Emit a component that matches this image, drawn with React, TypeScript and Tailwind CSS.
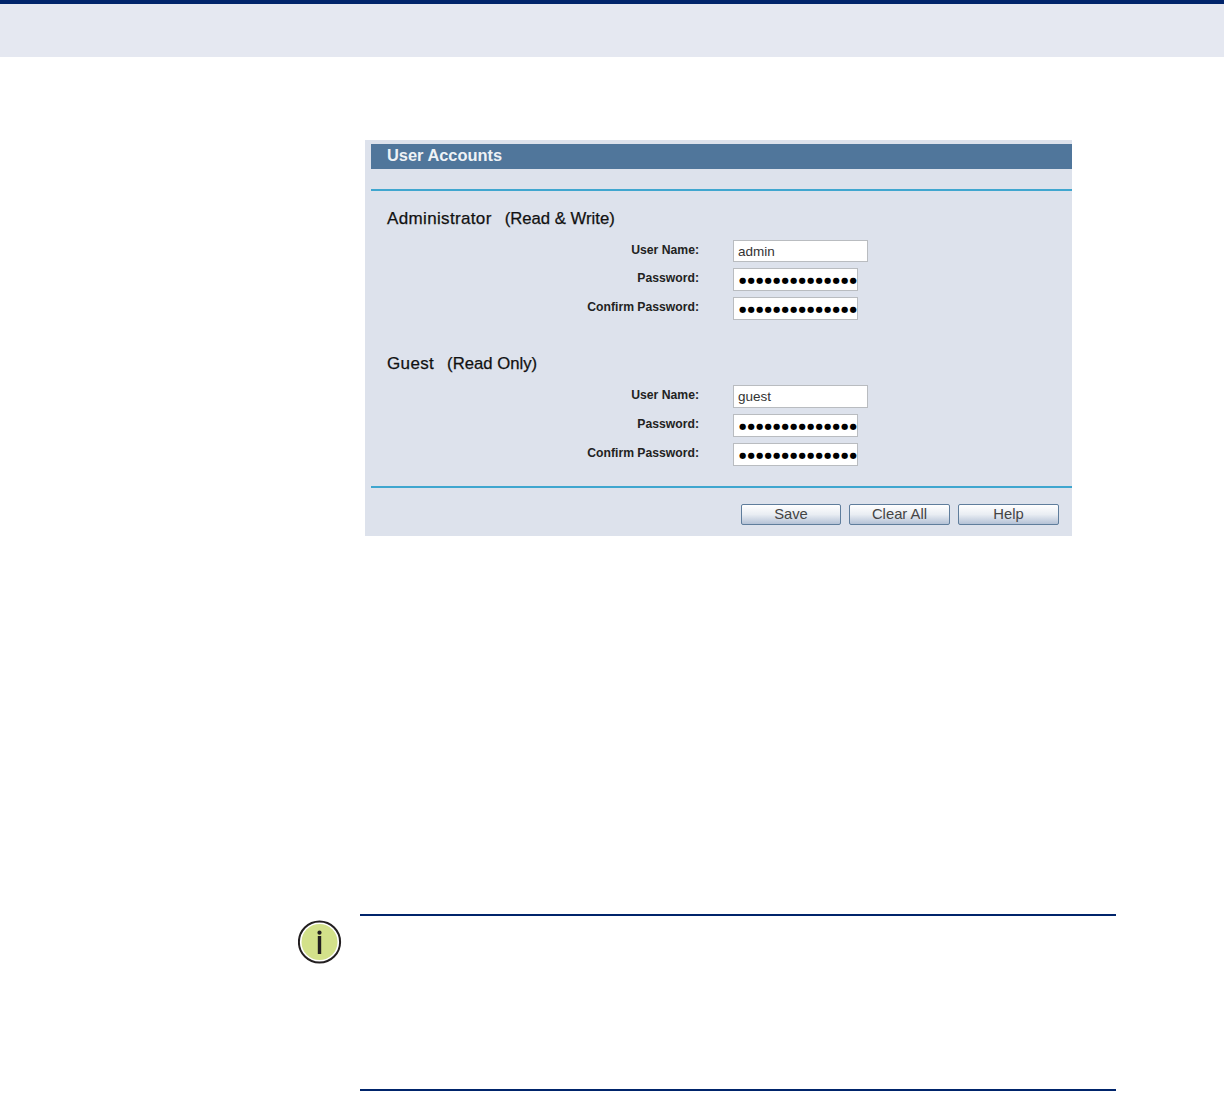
import React from "react";

const DOTS = "●●●●●●●●●●●●●●●";

function FieldLabel({ label }: { label: string }) {
  return (
    <div className="w-[329px] pr-[1px] pb-[2px] text-right text-[12.2px] font-bold text-[#222]">{label}</div>
  );
}

function TextRow({ label, value, tall }: { label: string; value: string; tall?: boolean }) {
  return (
    <div className={tall ? "flex items-center h-[23px]" : "flex items-center h-[22px]"}>
      <FieldLabel label={label} />
      <div className="ml-[33px] w-[135px] h-full bg-white border border-[#b9bcc0] pl-[4px] text-[13.5px] leading-[21px] text-[#333]">
        {value}
      </div>
    </div>
  );
}

function PasswordRow({ label }: { label: string }) {
  return (
    <div className="flex items-center h-[23px]">
      <FieldLabel label={label} />
      <div className="ml-[33px] w-[125px] h-[23px] bg-white border border-[#b9bcc0] pl-[5px] overflow-hidden whitespace-nowrap text-[8.4px] tracking-[1.2px] leading-[22px] text-black font-['DejaVu_Sans',sans-serif]">
        {DOTS}
      </div>
    </div>
  );
}

function AccountBlock({ title, role, user, tall }: { title: string; role: string; user: string; tall?: boolean }) {
  return (
    <div>
      <div className="pl-[16px] h-[22px] flex items-baseline gap-[13px] leading-[22px] text-[#111] whitespace-pre [-webkit-text-stroke:0.25px_#111]">
        <span className="text-[17px] tracking-[0.35px]">{title}</span>
        <span className="text-[16.7px]">{role}</span>
      </div>
      <div className="mt-[10px] flex flex-col gap-[6px]">
        <TextRow label="User Name:" value={user} tall={tall} />
        <PasswordRow label="Password:" />
        <PasswordRow label="Confirm Password:" />
      </div>
    </div>
  );
}

function PanelButton({ label, width }: { label: string; width: string }) {
  return (
    <button className={`${width} h-[21px] rounded-[2px] border border-[#5f7d9c] bg-gradient-to-b from-white via-[#e9edf3] to-[#b4c2d6] text-[14.8px] leading-[19px] text-[#444]`}>
      {label}
    </button>
  );
}

export default function App() {
  return (
    <div className="w-[1224px] h-[1096px] bg-white overflow-hidden font-['Liberation_Sans',Arial,sans-serif]">
      {/* Page header band */}
      <div className="h-[57px] border-t-4 border-[#00246b] bg-[#e5e8f1]" />

      {/* Screenshot panel */}
      <div className="ml-[365px] mt-[83px] w-[707px] h-[396px] bg-[#dde2ec] pl-[6px] pt-[4px]">
        <div className="h-[25px] bg-[#50769b] pl-[16px] text-[16.4px] font-bold leading-[23px] text-[#eef2f6]">
          User Accounts
        </div>
        <div className="mt-[20px] h-[2px] bg-[#3fa6cf]" />
        <div className="mt-[17px]">
          <AccountBlock title="Administrator" role="(Read & Write)" user="admin" />
        </div>
        <div className="mt-[33px]">
          <AccountBlock title="Guest" role="(Read Only)" user="guest" tall />
        </div>
        <div className="mt-[20px] h-[2px] bg-[#3fa6cf]" />
        <div className="mt-[16px] flex justify-end gap-[8px] pr-[13px]">
          <PanelButton label="Save" width="w-[100px]" />
          <PanelButton label="Clear All" width="w-[101px]" />
          <PanelButton label="Help" width="w-[101px]" />
        </div>
      </div>

      {/* Note box */}
      <div className="mt-[378px] ml-[298px] flex">
        <svg width="44" height="44" viewBox="0 0 44 44" className="mt-[6px] shrink-0">
          <circle cx="21.5" cy="22" r="20.6" fill="#fff" stroke="#231f20" strokeWidth="2" />
          <circle cx="21.5" cy="22" r="18" fill="#d3e18a" />
          <circle cx="21.5" cy="12.7" r="2.1" fill="#231f20" />
          <rect x="19.8" y="16" width="3.4" height="18" fill="#231f20" />
        </svg>
        <div className="ml-[18px] w-[756px] h-[177px] border-y-2 border-[#00246b]" />
      </div>
    </div>
  );
}
